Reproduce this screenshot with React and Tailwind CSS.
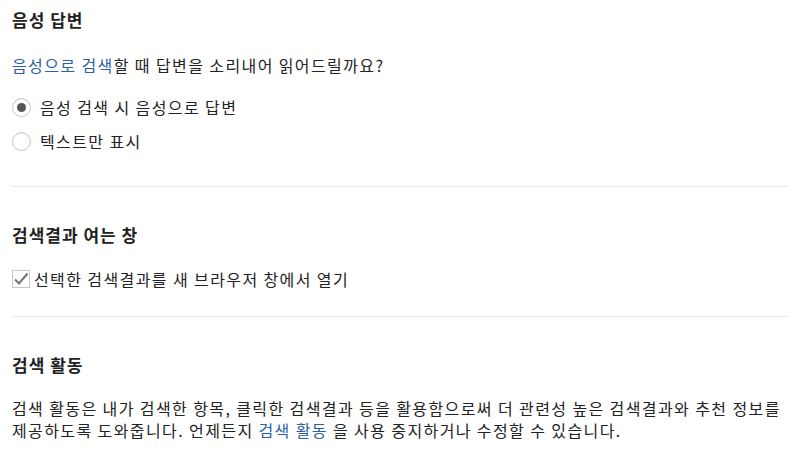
export default function App() {
  return (
    <div
      className="w-[788px] h-[451px] overflow-hidden bg-white pl-3 text-[#222]"
      style={{ fontFamily: '"Noto Sans CJK KR", "Noto Sans", sans-serif' }}
    >
      {/* 음성 답변 */}
      <section className="pt-[8px] pb-[34px]">
        <h2 className="text-[17px] font-bold leading-[24px] tracking-[1px]">음성 답변</h2>
        <p className="mt-[22px] text-[16px] leading-[22px] tracking-[1.4px]">
          <a className="text-[#2b5ea7]">음성으로 검색</a>할 때 답변을 소리내어 읽어드릴까요?
        </p>
        <div className="mt-[20px] flex flex-col gap-[12px]">
          <label className="flex items-center gap-[9px] text-[16px] leading-[22px] tracking-[1.4px]">
            <span className="w-[19px] h-[19px] rounded-full border border-[#c8c8c8] bg-white flex items-center justify-center shadow-[inset_0_1px_1px_rgba(0,0,0,0.08)]">
              <span className="w-[9px] h-[9px] rounded-full bg-[#555]" />
            </span>
            음성 검색 시 음성으로 답변
          </label>
          <label className="flex items-center gap-[9px] text-[16px] leading-[22px] tracking-[1.4px]">
            <span className="w-[19px] h-[19px] rounded-full border border-[#c8c8c8] bg-white shadow-[inset_0_1px_1px_rgba(0,0,0,0.08)]" />
            텍스트만 표시
          </label>
        </div>
      </section>
      <div className="h-px bg-[#e8e8e8]" />

      {/* 검색결과 여는 창 */}
      <section className="pt-[36px] pb-[26px]">
        <h2 className="text-[17px] font-bold leading-[24px] tracking-[1px]">검색결과 여는 창</h2>
        <label className="mt-[21px] flex items-center gap-[4px] text-[16px] leading-[22px] tracking-[1.4px]">
          <span className="w-[18px] h-[18px] border border-[#c8c8c8] bg-white flex items-center justify-center">
            <svg width="16" height="14" viewBox="0 0 16 14">
              <path d="M2 7.5 L6 11.5 L14.5 1.5" fill="none" stroke="#777" strokeWidth="2.2" />
            </svg>
          </span>
          선택한 검색결과를 새 브라우저 창에서 열기
        </label>
      </section>
      <div className="h-px bg-[#e8e8e8]" />

      {/* 검색 활동 */}
      <section className="pt-[36px]">
        <h2 className="text-[17px] font-bold leading-[24px] tracking-[1px]">검색 활동</h2>
        <p className="mt-[20px] text-[16px] leading-[22px] tracking-[1.4px] whitespace-nowrap">
          검색 활동은 내가 검색한 항목, 클릭한 검색결과 등을 활용함으로써 더 관련성 높은 검색결과와 추천 정보를
          <br />
          제공하도록 도와줍니다. 언제든지 <a className="text-[#2b5ea7]">검색 활동</a> 을 사용 중지하거나 수정할 수 있습니다.
        </p>
      </section>
    </div>
  );
}
